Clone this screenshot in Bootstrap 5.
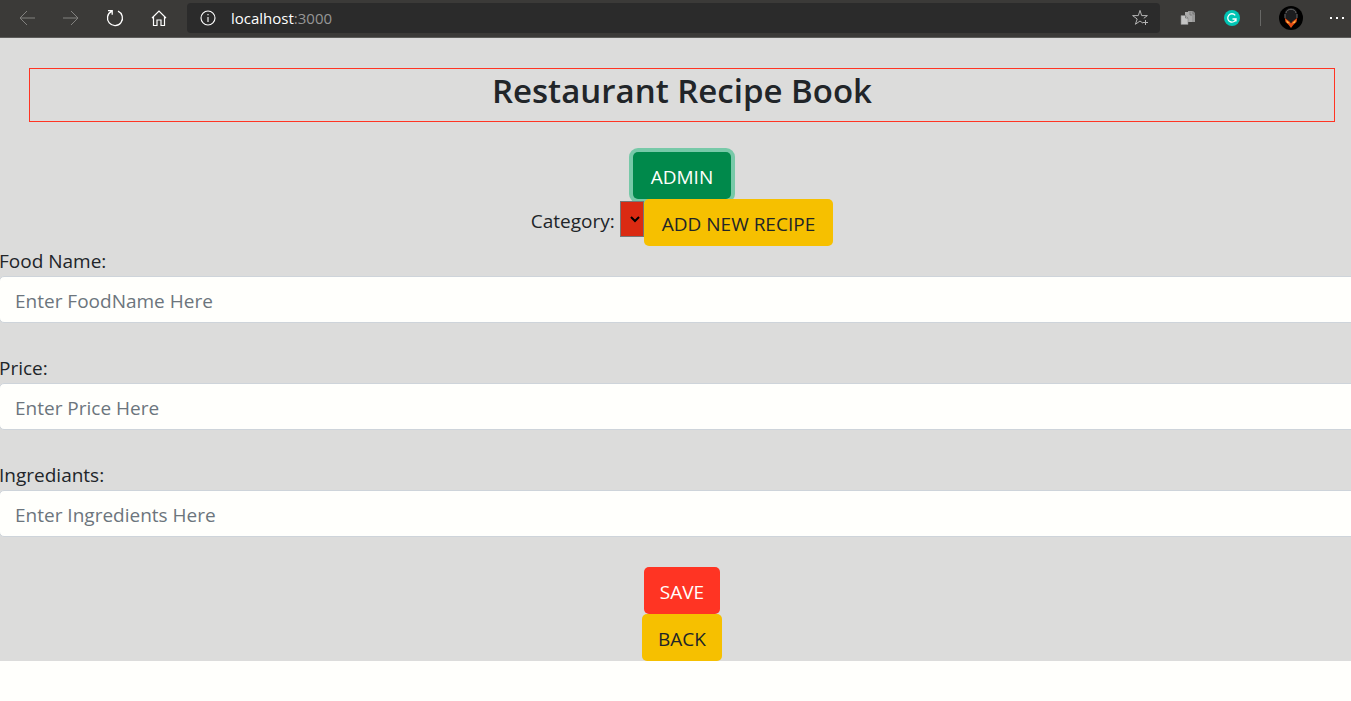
<!DOCTYPE html>
<html lang="en">
<head>
<meta charset="utf-8">
<meta name="viewport" content="width=device-width, initial-scale=1">
<title>Restaurant Recipe Book</title>
<link href="https://cdn.jsdelivr.net/npm/bootstrap@5.3.0/dist/css/bootstrap.min.css" rel="stylesheet">
<style>
  body { font-family: "Open Sans", "Noto Sans", sans-serif; font-size: 19px; line-height: 30px; background: #fffffc; color: #212529; overflow-x: hidden; }
  .browser-bar { height: 38px; padding-bottom: 2px; background: #3b3a38; border-bottom: 1px solid #5c5c5a; color: #fff; }
  .tool { width: 44px; height: 36px; padding: 0; border: 0; background: none; color: #fff; display: flex; align-items: center; justify-content: center; flex: none; }
  .tool:disabled { color: #82817f; }
  .nav-tools { padding-left: 5px; }
  .address { height: 30px; margin-left: 6px; padding-left: 13px; background: #2b2b2b; border-radius: 4px; }
  .extensions { width: 191px; padding-left: 6px; }
  .url { margin-left: 15px; font-size: 15px; line-height: 20px; color: #fff; text-decoration: none; }
  .url span { color: #969696; }
  .divider { flex: none; width: 1px; height: 16px; margin: 0 8px 0 6px; background: #686866; }
  /* the recipe page runs a little past the right edge of the window */
  .recipe-page { margin-right: -13px; padding-top: 30px; background: #dcdcdb; }
  .page-title { margin: 0 29px 30px; height: 54px; border: 1px solid #ff3423; font-size: 33px; line-height: 44px; font-weight: 600; text-align: center; }
  .page-btn { height: 47px; padding: 2px 16px 0; border: 0; border-radius: 5px; font-size: 19px; line-height: 30px; }
  .toolbar-btn { padding-left: 18px; padding-right: 18px; }
  .btn-admin, .btn-admin:hover { background: #00894b; color: #fffffc; box-shadow: 0 0 0 4px #77c9a8; }
  .btn-gold, .btn-gold:hover { background: #f6c000; color: #212529; position: relative; }
  .btn-save, .btn-save:hover { background: #ff3423; color: #fffffc; }
  .category-label { padding-top: 7px; }
  .category { width: 24px; height: 36px; margin: 2px 0 0 5px; padding: 0; background: #da2a12; border: 1px solid #767676; border-radius: 0; color: #000; }
  .field { margin: 0 0 30px -1px; }
  .field label { display: block; }
  .field .form-control { height: 47px; padding: 2px 15px 0; font-size: 19px; line-height: 30px; background: #fffffc; border: 1px solid #ced4da; border-radius: 5px; }
  .field .form-control::placeholder { color: #6c757d; opacity: 1; }
</style>
</head>
<body>
<header class="browser-bar d-flex align-items-center">
  <div class="nav-tools d-flex">
    <button class="tool" type="button" disabled aria-label="Back"><svg width="18" height="18" viewBox="0 0 18 18" fill="none" stroke="currentColor"><path d="M17 9H2M9 2 2 9l7 7"/></svg></button>
    <button class="tool" type="button" disabled aria-label="Forward"><svg width="18" height="18" viewBox="0 0 18 18" fill="none" stroke="currentColor"><path d="M1 9h15M9 2l7 7-7 7"/></svg></button>
    <button class="tool" type="button" aria-label="Reload"><svg width="18" height="18" viewBox="0 0 18 18" fill="none" stroke="currentColor" stroke-width="1.3"><path d="M12 2.2A7.5 7.5 0 1 1 5.500 2.400M2 1.600h4.200v4.200"/></svg></button>
    <button class="tool" type="button" aria-label="Home"><svg width="18" height="18" viewBox="0 0 18 18" fill="none" stroke="currentColor" stroke-width="1.2"><path d="M2 9 9 2l7 7M3.500 8v8.500h3.500v-5.500h4v5.500h3.500V8"/></svg></button>
  </div>
  <div class="address d-flex align-items-center flex-grow-1">
    <svg width="16" height="16" viewBox="0 0 16 16" fill="none" stroke="#fff" stroke-width="1.1"><circle cx="8" cy="8" r="7"/><path d="M8 7v5M8 4v1.300"/></svg>
    <a class="url me-auto" href="#">localhost<span>:3000</span></a>
    <svg class="me-2" width="22" height="20" viewBox="0 0 22 20" fill="none" stroke="#b4b4b4"><path d="M13 15.200 10 13l-4.600 3.300 1.800-5.300-4.600-3.400h5.700L10 2.400l1.700 5.200h5.700L13.800 10.300M15.500 12v5M13 14.500h5"/></svg>
  </div>
  <div class="extensions d-flex align-items-center">
    <button class="tool" type="button" aria-label="Copy pages extension"><svg width="16" height="16" viewBox="0 0 16 16"><path fill="#989898" d="M8 1h5l2 2v9H8z"/><path fill="#aaa" d="M5 2h5l2 2v8H5z"/><path fill="#c4c4c4" stroke="#858585" stroke-width=".6" d="M1 5.500h4.500L8 8v6.500H1z"/><path d="M5.500 5.500V8H8M10 2v3h2M13 1v3h2" stroke="#686868" stroke-width=".7" fill="none"/></svg></button>
    <button class="tool" type="button" aria-label="Grammar extension"><svg width="16" height="16" viewBox="0 0 16 16" fill="none"><circle cx="8" cy="8" r="8" fill="#00c4b4"/><path d="M11.200 5.300A4.200 4.200 0 1 0 12 9H8.500M12 9v2.500" stroke="#fff" stroke-width="1.300"/></svg></button>
    <span class="divider"></span>
    <button class="tool" type="button" aria-label="Profile"><svg width="24" height="24" viewBox="0 0 24 24"><circle cx="12" cy="12" r="12" fill="#000"/><path d="M12 2C7.500 2 5.200 5 5.700 10c.3 4.500 3 8.500 6.300 11.800 3.300-3.300 6-7.300 6.300-11.800C18.800 5 16.500 2 12 2z" fill="#1c1d1f"/><path d="M7 7c1-5 9-5 10 0M6 8v4M18 8v4" stroke="#666" fill="none"/><path d="M5.800 12 10.500 15.500l1.500 2 1.500-2L18.200 12l-.7 4-3.300 3L12 22l-2.200-3-3.300-3z" fill="#e64c12"/><path d="m7 14 3.900 3.600-2.700-.8zM17 14l-3.900 3.600 2.700-.8z" fill="#ffd24a"/></svg></button>
    <button class="tool" type="button" aria-label="More"><svg class="ms-1" width="16" height="4" viewBox="0 0 16 4" fill="#fff"><path d="M1 1h2v2H1zM7 1h2v2H7zM13 1h2v2h-2z"/></svg></button>
  </div>
</header>

<main class="recipe-page">
  <h1 class="page-title">Restaurant Recipe Book</h1>
  <div class="d-flex justify-content-center"><button class="btn page-btn toolbar-btn btn-admin" type="button">ADMIN</button></div>
  <div class="d-flex justify-content-center align-items-start">
    <label for="category" class="category-label">Category:</label>
    <select id="category" class="category"></select>
    <button class="btn page-btn toolbar-btn btn-gold" type="button">ADD NEW RECIPE</button>
  </div>
  <form>
    <div class="field"><label for="food">Food Name:</label><input id="food" class="form-control" type="text" placeholder="Enter FoodName Here"></div>
    <div class="field"><label for="price">Price:</label><input id="price" class="form-control" type="text" placeholder="Enter Price Here"></div>
    <div class="field"><label for="ingredients">Ingrediants:</label><input id="ingredients" class="form-control" type="text" placeholder="Enter Ingredients Here"></div>
    <div class="d-flex flex-column align-items-center">
      <button class="btn page-btn btn-save" type="button">SAVE</button>
      <button class="btn page-btn btn-gold" type="button">BACK</button>
    </div>
  </form>
</main>
<script src="https://cdn.jsdelivr.net/npm/bootstrap@5.3.0/dist/js/bootstrap.bundle.min.js"></script>
</body>
</html>
